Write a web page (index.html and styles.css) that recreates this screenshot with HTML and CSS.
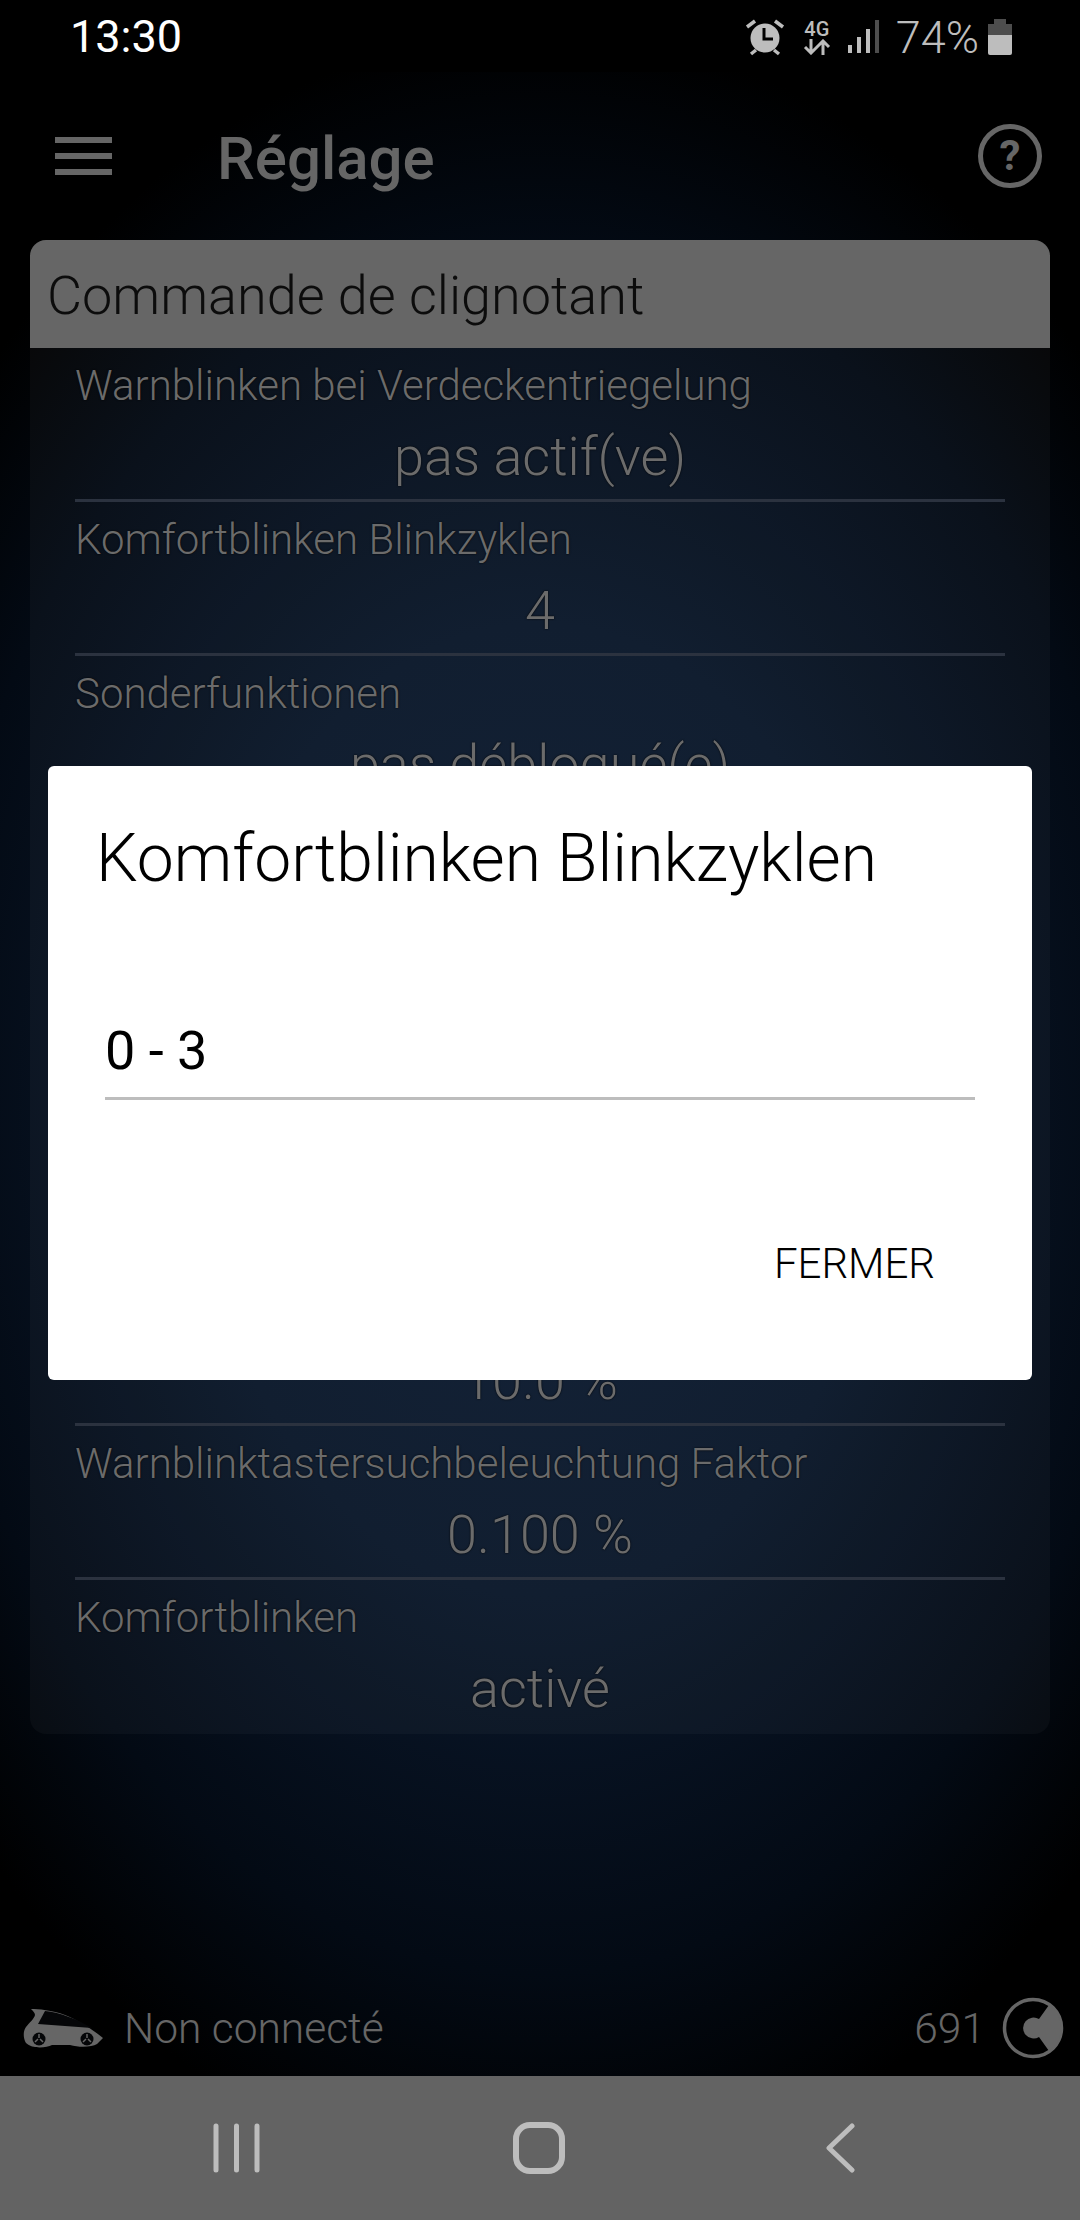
FILE: index.html
```html
<!DOCTYPE html>
<html lang="fr">
<head>
    <meta charset="UTF-8">
    <meta name="viewport" content="width=device-width, initial-scale=1.0">
    <title>Réglage</title>
    <link rel="stylesheet" href="styles.css">
</head>
<body>
    <div class="screen">
        <div class="status-bar">
            <span class="clock">13:30</span>
            <div class="status-icons">
                <svg class="alarm-icon" width="40" height="38" viewBox="0 0 40 38">
                    <circle cx="20" cy="20" r="14.5" fill="#bdbdbd"/>
                    <path d="M19 10v11h9" fill="none" stroke="#000" stroke-width="3"/>
                    <path d="M2 9l8-6M38 9l-8-6M6 36l5-4M34 36l-5-4" stroke="#bdbdbd" stroke-width="3.5" fill="none"/>
                </svg>
                <div class="net-icon">
                    <span class="net-label">4G</span>
                    <svg width="28" height="16" viewBox="0 0 28 16">
                        <path d="M8 0v14M2 8l6 6 6-6M20 16V2M14 8l6-6 6 6" fill="none" stroke="#bdbdbd" stroke-width="3"/>
                    </svg>
                </div>
                <svg class="signal-icon" width="34" height="36" viewBox="0 0 34 36">
                    <rect x="1" y="26" width="4" height="8" fill="#bdbdbd"/>
                    <rect x="10" y="18" width="4" height="16" fill="#bdbdbd"/>
                    <rect x="19" y="10" width="4" height="24" fill="#bdbdbd"/>
                    <rect x="28" y="1" width="4" height="33" fill="#4d4d4d"/>
                </svg>
                <span class="battery-text">74%</span>
                <svg class="battery-icon" width="24" height="36" viewBox="0 0 24 36">
                    <path d="M6 0h12v5h6v11H0V5h6z" fill="#4d4d4d"/>
                    <path d="M0 16h24v18a2 2 0 0 1-2 2H2a2 2 0 0 1-2-2z" fill="#bdbdbd"/>
                </svg>
            </div>
        </div>

        <div class="app-bar">
            <div class="menu-icon">
                <span></span>
                <span></span>
                <span></span>
            </div>
            <span class="app-title">Réglage</span>
            <div class="help-icon">?</div>
        </div>

        <div class="card">
            <div class="card-header">Commande de clignotant</div>
            <div class="card-body">
                <div class="row">
                    <div class="row-label">Warnblinken bei Verdeckentriegelung</div>
                    <div class="row-value">pas actif(ve)</div>
                </div>
                <div class="row">
                    <div class="row-label">Komfortblinken Blinkzyklen</div>
                    <div class="row-value">4</div>
                </div>
                <div class="row">
                    <div class="row-label">Sonderfunktionen</div>
                    <div class="row-value">pas débloqué(e)</div>
                </div>
                <div class="row"></div>
                <div class="row"></div>
                <div class="row"></div>
                <div class="row">
                    <div class="row-label"></div>
                    <div class="row-value">10.0 %</div>
                </div>
                <div class="row">
                    <div class="row-label">Warnblinktastersuchbeleuchtung Faktor</div>
                    <div class="row-value">0.100 %</div>
                </div>
                <div class="row row-last">
                    <div class="row-label">Komfortblinken</div>
                    <div class="row-value">activé</div>
                </div>
            </div>
        </div>

        <div class="footer">
            <div class="footer-side">
                <svg class="car-icon" width="90" height="45" viewBox="20 15 90 45">
                    <path d="M31 18C38 18 52 19 65 24C78 29 92 38 103 47L97 53C92 56 80 57 70 54L52 54C46 57 32 58 26 52C23 47 23 40 26 36C30 31 34 28 35 24C35 22 33 20 31 18Z" fill="#666"/>
                    <path d="M38 33L45 20C60 21 78 29 92 37Z" fill="#050608"/>
                    <circle cx="39" cy="48" r="6.500" fill="#050608"/>
                    <circle cx="87" cy="48" r="6.500" fill="#050608"/>
                    <path d="M39 43v4M35 51l3-3M43 51l-3-3M87 43v4M83 51l3-3M91 51l-3-3" stroke="#666" stroke-width="1.500"/>
                </svg>
                <span class="footer-text">Non connecté</span>
            </div>
            <div class="footer-side">
                <span class="footer-text">691</span>
                <svg class="points-icon" width="62" height="62" viewBox="0 0 62 62">
                    <circle cx="31" cy="31" r="28.500" fill="none" stroke="#666" stroke-width="3.500"/>
                    <path d="M47 8A28 28 0 0 1 47 54L37 40A10.500 10.500 0 1 1 37 22Z" fill="#666"/>
                </svg>
            </div>
        </div>

        <div class="nav-bar">
            <svg width="47" height="50" viewBox="0 0 47 50">
                <path d="M3 3v44M23.500 3v44M44 3v44" stroke="#bdbdbd" stroke-width="5" stroke-linecap="round"/>
            </svg>
            <svg class="nav-home" width="52" height="52" viewBox="0 0 52 52">
                <rect x="3" y="3" width="46" height="46" rx="14" fill="none" stroke="#bdbdbd" stroke-width="6"/>
            </svg>
            <svg width="29" height="50" viewBox="0 0 29 50">
                <path d="M26 3L3 25l23 22" fill="none" stroke="#bdbdbd" stroke-width="5" stroke-linecap="round" stroke-linejoin="round"/>
            </svg>
        </div>

        <div class="dialog">
            <div class="dialog-title">Komfortblinken Blinkzyklen</div>
            <div class="dialog-field">0 - 3</div>
            <div class="dialog-actions">
                <span class="dialog-button">FERMER</span>
            </div>
        </div>
    </div>
</body>
</html>
```

FILE: styles.css
```css
body {
    margin: 0;
    padding: 0;
    background-color: #000;
    font-family: 'Roboto', sans-serif;
}

.screen {
    position: relative;
    width: 1080px;
    height: 2220px;
    overflow: hidden;
    display: flex;
    flex-direction: column;
    background: radial-gradient(ellipse 760px 1080px at 50% 50%, #0d1c33 0%, #0a172a 45%, #030a14 80%, #000 100%);
}

.status-bar {
    height: 72px;
    padding: 2px 68px 0 70px;
    box-sizing: border-box;
    display: flex;
    justify-content: space-between;
    align-items: center;
    background-color: #000;
}

.clock {
    color: #fff;
    font-size: 45px;
    line-height: 70px;
}

.status-icons {
    display: flex;
    align-items: center;
}

.alarm-icon {
    margin-right: 18px;
}

.net-icon {
    width: 28px;
    margin-right: 16px;
    display: flex;
    flex-direction: column;
    align-items: center;
}

.net-label {
    color: #bdbdbd;
    font-size: 20px;
    font-weight: 500;
    line-height: 20px;
}

.signal-icon {
    margin-right: 15px;
}

.battery-text {
    color: #bdbdbd;
    font-size: 45px;
    font-weight: 300;
    margin-right: 9px;
}

.app-bar {
    height: 168px;
    padding: 0 38px 0 55px;
    display: flex;
    align-items: center;
    box-sizing: border-box;
}

.menu-icon {
    width: 57px;
    display: flex;
    flex-direction: column;
    gap: 10px;
    margin-right: 105px;
}

.menu-icon span {
    height: 6px;
    background-color: #666;
}

.app-title {
    flex: 1;
    padding-top: 4px;
    color: #666;
    font-size: 60px;
    font-weight: 500;
}

.help-icon {
    width: 54px;
    height: 54px;
    border: 5px solid #666;
    border-radius: 50%;
    color: #666;
    font-size: 42px;
    font-weight: 700;
    line-height: 54px;
    text-align: center;
}

.card {
    margin: 0 30px;
    border-radius: 16px;
    overflow: hidden;
    background-color: rgba(255, 255, 255, 0.03);
}

.card-header {
    height: 108px;
    padding-left: 17px;
    background-color: #666;
    color: #0c0c0c;
    font-size: 54px;
    font-weight: 300;
    line-height: 112px;
}

.card-body {
    padding: 0 45px;
}

.row {
    height: 154px;
    box-sizing: border-box;
    padding-top: 12px;
    border-bottom: 3px solid #2b323f;
}

.row-last {
    border-bottom: none;
}

.row-label {
    min-height: 52px;
    color: #6b6b6b;
    font-size: 42px;
    font-weight: 300;
    line-height: 52px;
    text-shadow: 0 0 2px #000;
}

.row-value {
    margin-top: 10px;
    color: #6b6b6b;
    font-size: 54px;
    font-weight: 300;
    line-height: 70px;
    text-align: center;
    text-shadow: 0 0 2px #000;
}

.footer {
    margin-top: auto;
    height: 110px;
    padding: 14px 16px 0 20px;
    box-sizing: border-box;
    display: flex;
    justify-content: space-between;
    align-items: center;
}

.footer-side {
    display: flex;
    align-items: center;
}

.car-icon {
    margin-right: 14px;
}

.footer-text {
    color: #666;
    font-size: 42.5px;
    font-weight: 300;
}

.points-icon {
    margin-left: 17px;
}

.nav-bar {
    height: 144px;
    padding-left: 213px;
    display: flex;
    align-items: center;
    background-color: #636363;
}

.nav-home {
    margin: 0 261px 0 253px;
}

/* dialog sits over the list */
.dialog {
    position: absolute;
    left: 48px;
    top: 766px;
    width: 984px;
    height: 614px;
    box-sizing: border-box;
    padding: 55px 57px 0 48px;
    display: flex;
    flex-direction: column;
    background-color: #fff;
    border-radius: 6px;
}

.dialog-title {
    color: #000;
    font-size: 66px;
    font-weight: 300;
    line-height: 76px;
}

.dialog-field {
    margin: 121px 0 0 9px;
    padding-bottom: 13px;
    border-bottom: 3px solid #bdbdbd;
    color: #000;
    font-size: 54px;
    line-height: 66px;
}

.dialog-actions {
    display: flex;
    justify-content: flex-end;
    margin-top: 139px;
    padding-right: 40px;
}

.dialog-button {
    color: #000;
    font-size: 42px;
    font-weight: 300;
    line-height: 50px;
}
```
